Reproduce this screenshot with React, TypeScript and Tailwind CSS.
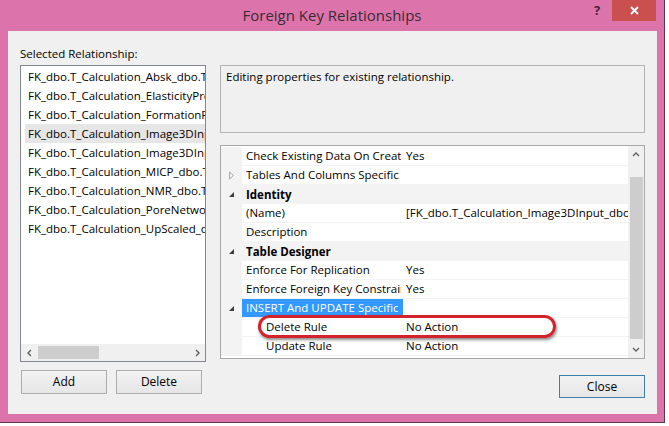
import React from "react";

const listItems = [
  "FK_dbo.T_Calculation_Absk_dbo.T_Absk",
  "FK_dbo.T_Calculation_ElasticityProperties",
  "FK_dbo.T_Calculation_FormationFactor",
  "FK_dbo.T_Calculation_Image3DInput_dbo",
  "FK_dbo.T_Calculation_Image3DInput2_dbo",
  "FK_dbo.T_Calculation_MICP_dbo.T_MICP",
  "FK_dbo.T_Calculation_NMR_dbo.T_NMR",
  "FK_dbo.T_Calculation_PoreNetwork",
  "FK_dbo.T_Calculation_UpScaled_dbo",
];

type Row = {
  kind: "cat" | "prop";
  name: string;
  value?: string;
  indent?: boolean;
  icon?: "open" | "closed" | "none";
  selected?: boolean;
};

const rows: Row[] = [
  { kind: "prop", name: "Check Existing Data On Creati", value: "Yes" },
  { kind: "prop", name: "Tables And Columns Specific", value: "", icon: "closed" },
  { kind: "cat", name: "Identity", icon: "open" },
  { kind: "prop", name: "(Name)", value: "[FK_dbo.T_Calculation_Image3DInput_dbo.T_Image3DInput]" },
  { kind: "prop", name: "Description", value: "" },
  { kind: "cat", name: "Table Designer", icon: "open" },
  { kind: "prop", name: "Enforce For Replication", value: "Yes" },
  { kind: "prop", name: "Enforce Foreign Key Constrair", value: "Yes" },
  { kind: "prop", name: "INSERT And UPDATE Specific", value: "", icon: "open", selected: true },
  { kind: "prop", name: "Delete Rule", value: "No Action", indent: true },
  { kind: "prop", name: "Update Rule", value: "No Action", indent: true },
];

function OpenTri() {
  return (
    <svg width="7" height="7" viewBox="0 0 7 7">
      <polygon points="6,1 6,6 1,6" fill="#3c3c3c" />
    </svg>
  );
}
function ClosedTri() {
  return (
    <svg width="7" height="9" viewBox="0 0 7 9">
      <polygon points="1.5,1 5.5,4.5 1.5,8" fill="none" stroke="#a6a6a6" strokeWidth="1" />
    </svg>
  );
}

function Chevron({ dir }: { dir: "up" | "down" | "left" | "right" }) {
  const pts = {
    up: "1,5 4,2 7,5",
    down: "1,2 4,5 7,2",
    left: "5,1 2,4 5,7",
    right: "3,1 6,4 3,7",
  }[dir];
  return (
    <svg width="8" height="8" viewBox="0 0 8 8">
      <polyline points={pts} fill="none" stroke="#606060" strokeWidth="1.4" />
    </svg>
  );
}

function WinButton({ label, primary }: { label: string; primary?: boolean }) {
  return (
    <div
      className={
        "flex items-center justify-center text-[12px] text-black bg-gradient-to-b from-[#f2f2f2] to-[#e6e6e6] border " +
        (primary ? "border-[#3c7fb1] h-[23px] w-[86px]" : "border-[#acacac] h-[24px] w-[86px]")
      }
    >
      {label}
    </div>
  );
}

export default function App() {
  return (
    <div className="w-[669px] h-[426px] bg-white font-['Segoe_UI','Open_Sans',sans-serif] text-black">
      <div className="w-[665px] h-[423px] bg-[#dc74ab] border-r border-b border-[#5a3a4a] flex flex-col relative">
        {/* Title bar */}
        <div className="h-[31px] flex items-center justify-center text-[15px] text-[#3b2a33] pb-[1px]">
          Foreign Key Relationships
        </div>
        <div className="absolute top-0 right-[8px] flex">
          <div className="w-[30px] h-[21px] flex items-center justify-center text-[13px] font-bold text-[#4a2340]">?</div>
          <div className="w-[44px] h-[21px] bg-[#c9504f] flex items-center justify-center">
            <svg width="9" height="9" viewBox="0 0 9 9">
              <path d="M1 1 L8 8 M8 1 L1 8" stroke="white" strokeWidth="1.8" />
            </svg>
          </div>
        </div>

        {/* Client */}
        <div className="ml-[8px] w-[649px] h-[383px] bg-[#f0f0f0] flex gap-[14px] pl-[12px] pr-[12px] text-[11.5px]">
          {/* Left column */}
          <div className="w-[186px] flex flex-col">
            <div className="h-[34px] flex items-end pb-[6px] leading-none">Selected Relationship:</div>
            <div className="h-[297px] bg-white border border-[#828790] flex flex-col">
              <div className="flex-1 pt-[1px] pl-[4px] overflow-hidden">
                {listItems.map((t, i) => (
                  <div
                    key={i}
                    className={
                      "h-[19px] flex items-center pl-[3px] whitespace-nowrap overflow-hidden " +
                      (i === 3 ? "bg-[#e6e6e6]" : "")
                    }
                  >
                    {t}
                  </div>
                ))}
              </div>
              <div className="h-[17px] bg-[#f0f0f0] flex items-center">
                <div className="w-[17px] flex justify-center"><Chevron dir="left" /></div>
                <div className="flex-1 h-full flex items-center">
                  <div className="w-[61px] h-[13px] bg-[#cdcdcd]" />
                </div>
                <div className="w-[17px] flex justify-center"><Chevron dir="right" /></div>
              </div>
            </div>
            <div className="flex gap-[9px] mt-[8px] pl-[1px]">
              <WinButton label="Add" />
              <WinButton label="Delete" />
            </div>
          </div>

          {/* Right column */}
          <div className="w-[425px] flex flex-col pt-[34px]">
            <div className="h-[68px] border border-[#b4b4b4] px-[5px] pt-[2px]">
              Editing properties for existing relationship.
            </div>
            <div className="mt-[12px] h-[214px] border border-[#a8a8a8] bg-white flex relative">
              <div className="flex-1 flex flex-col pt-[1px] overflow-hidden">
                {rows.map((r, i) => (
                  <div key={i} className="h-[19px] flex">
                    <div className="w-[21px] bg-[#f3f3f3] flex items-center justify-center">
                      {r.icon === "open" && <OpenTri />}
                      {r.icon === "closed" && <ClosedTri />}
                    </div>
                    {r.kind === "cat" ? (
                      <div className="flex-1 bg-[#f3f3f3] flex items-center pl-[4px] font-bold">{r.name}</div>
                    ) : (
                      <>
                        <div
                          className={
                            "w-[161px] pr-[2px] flex items-center whitespace-nowrap overflow-hidden border-b border-[#f3f3f3] " +
                            (r.indent ? "pl-[24px] " : "pl-[4px] ") +
                            (r.selected ? "bg-[#3399ff] text-white border-[#3399ff]" : "")
                          }
                        >
                          <span className="overflow-hidden">{r.name}</span>
                        </div>
                        <div className="flex-1 flex items-center pl-[3px] whitespace-nowrap overflow-hidden border-b border-[#f3f3f3]">
                          {r.value}
                        </div>
                      </>
                    )}
                  </div>
                ))}
              </div>
              {/* Vertical scrollbar */}
              <div className="w-[16px] bg-[#f0f0f0] flex flex-col">
                <div className="h-[17px] flex items-center justify-center"><Chevron dir="up" /></div>
                <div className="flex-1 pt-[14px] pb-[2px] flex justify-center">
                  <div className="w-[13px] h-full bg-[#cdcdcd]" />
                </div>
                <div className="h-[17px] flex items-center justify-center"><Chevron dir="down" /></div>
              </div>
              {/* Red highlight annotation */}
              <div className="absolute left-[37px] top-[169px] w-[298px] h-[23px] rounded-[12px] border-[3px] border-[#d3222b] shadow-[1px_2px_3px_rgba(0,0,0,0.45)]" />
            </div>
            <div className="flex justify-end mt-[16px]">
              <WinButton label="Close" primary />
            </div>
          </div>
        </div>
      </div>
    </div>
  );
}
